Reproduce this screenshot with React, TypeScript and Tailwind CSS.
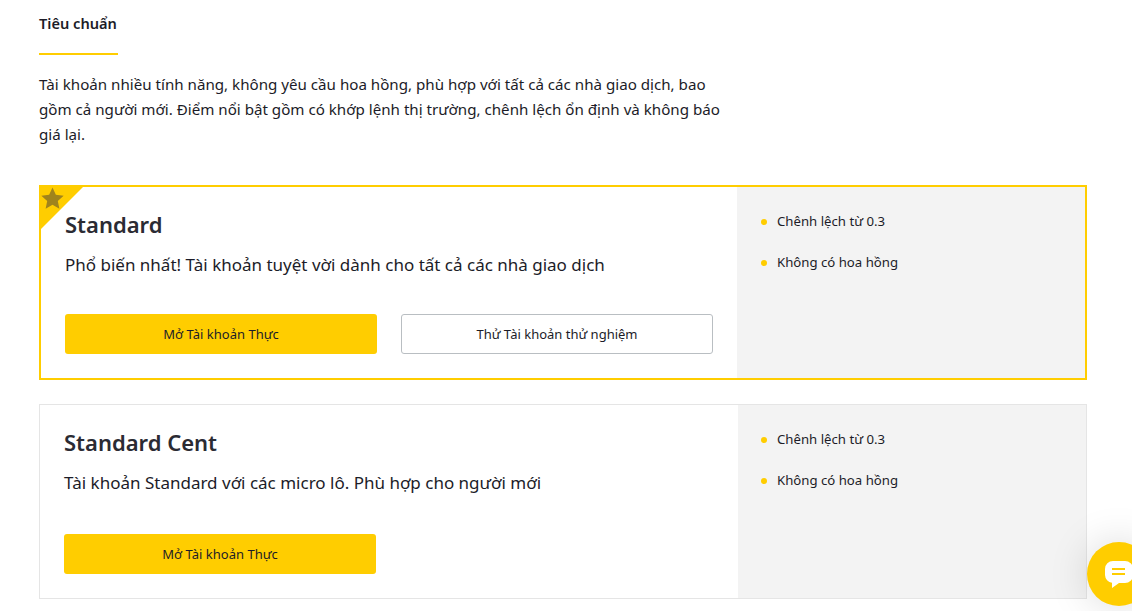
import type { ReactNode } from "react";

function Features({ items, featured }: { items: string[]; featured?: boolean }) {
  return (
    <ul
      className={`flex w-[348px] shrink-0 flex-col gap-[22px] bg-[#f3f3f3] pt-[25px] ${
        featured ? "pl-6" : "pl-[23px]"
      }`}
    >
      {items.map((item) => (
        <li key={item} className="flex h-[19px] items-center gap-[10px] text-[13.2px] leading-[19px] text-[#1c1c28]">
          <span className="h-1.5 w-1.5 shrink-0 rounded-full bg-[#ffcd00]" />
          {item}
        </li>
      ))}
    </ul>
  );
}

function AccountCard({
  title,
  description,
  featured,
  children,
}: {
  title: string;
  description: string;
  featured?: boolean;
  children: ReactNode;
}) {
  return (
    <div
      className={`relative flex h-[195px] w-[1048px] ${
        featured ? "border-2 border-[#ffcd00]" : "border border-[#e5e5e5]"
      }`}
    >
      {featured && (
        <div className="absolute -left-px -top-px h-[44px] w-[44px] bg-[#ffcd00] [clip-path:polygon(0_0,100%_0,0_100%)]">
          <svg viewBox="0 0 24 24" className="absolute left-0 top-0 h-[25px] w-[25px]">
            <path
              d="M12 1.5l3.2 6.9 7.5.9-5.600 5.100 1.500 7.400-6.600-3.700-6.600 3.700 1.500-7.400-5.600-5.100 7.500-.9z"
              fill="#a0831c"
            />
          </svg>
        </div>
      )}
      <div className="flex min-w-0 flex-1 flex-col pl-6 pr-6 pt-[19px]">
        <h3 className="text-[22px] font-semibold leading-[36px] text-[#2b2b33]">{title}</h3>
        <p className="mt-[10px] text-[17px] leading-[26px] text-[#1c1c28]">{description}</p>
        <div className={`flex gap-6 ${featured ? "mt-[36px]" : "mt-[38px]"}`}>{children}</div>
      </div>
      <Features featured={featured} items={["Chênh lệch từ 0.3", "Không có hoa hồng"]} />
    </div>
  );
}

function Button({ children, outline }: { children: ReactNode; outline?: boolean }) {
  return (
    <button
      type="button"
      className={`h-10 w-[312px] rounded-[3px] pt-[2px] text-[13px] text-[#1c1c28] ${
        outline ? "border border-[#b9bec2] bg-white" : "bg-[#ffcd00]"
      }`}
    >
      {children}
    </button>
  );
}

export default function App() {
  return (
    <div className="relative h-[611px] w-[1132px] overflow-hidden bg-white pl-[39px] font-['Noto_Sans',sans-serif]">
      <div className="pt-[12px] text-[14.6px] font-semibold leading-[22px] text-[#1c1c28]">Tiêu chuẩn</div>
      <div className="mt-[19px] h-0.5 w-[79px] bg-[#ffcd00]" />
      <p className="mt-[17px] w-[690px] text-[15.15px] leading-[25px] text-[#1c1c28]">
        Tài khoản nhiều tính năng, không yêu cầu hoa hồng, phù hợp với tất cả các nhà giao dịch, bao
        gồm cả người mới. Điểm nổi bật gồm có khớp lệnh thị trường, chênh lệch ổn định và không báo
        giá lại.
      </p>
      <div className="mt-[38px] flex flex-col gap-6">
        <AccountCard
          featured
          title="Standard"
          description="Phổ biến nhất! Tài khoản tuyệt vời dành cho tất cả các nhà giao dịch"
        >
          <Button>Mở Tài khoản Thực</Button>
          <Button outline>Thử Tài khoản thử nghiệm</Button>
        </AccountCard>
        <AccountCard
          title="Standard Cent"
          description="Tài khoản Standard với các micro lô. Phù hợp cho người mới"
        >
          <Button>Mở Tài khoản Thực</Button>
        </AccountCard>
      </div>
      <div className="absolute left-[1087px] top-[542px] flex h-16 w-16 items-center justify-center rounded-full bg-[#ffcd00] shadow-[0_0_40px_rgba(0,0,0,0.15)]">
        <svg viewBox="0 0 28 28" className="h-7 w-7">
          <path
            d="M8 1h12a8 8 0 0 1 8 8v6a8 8 0 0 1-8 8h-6l-7 5v-5.300a8 8 0 0 1-7-7.700v-6a8 8 0 0 1 8-8z"
            fill="#fff"
          />
          <rect x="7" y="8" width="13" height="2" fill="#ffcd00" />
          <rect x="7" y="13" width="13" height="2" fill="#ffcd00" />
        </svg>
      </div>
    </div>
  );
}
